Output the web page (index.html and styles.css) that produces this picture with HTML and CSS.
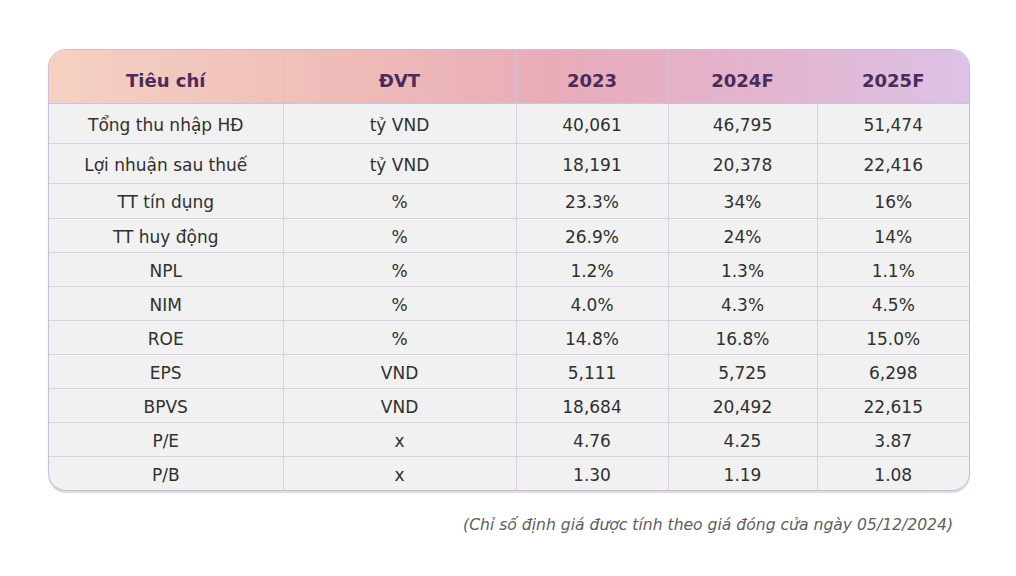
FILE: index.html
```html
<!DOCTYPE html>
<html lang="vi">
<head>
<meta charset="utf-8">
<title>Bảng chỉ số</title>
<link rel="stylesheet" href="styles.css">
</head>
<body>
<div class="page">
  <div class="card">
    <table class="data">
      <colgroup>
        <col class="c1"><col class="c2"><col class="c3"><col class="c4"><col class="c5">
      </colgroup>
      <thead>
        <tr><th>Tiêu chí</th><th>ĐVT</th><th>2023</th><th>2024F</th><th>2025F</th></tr>
      </thead>
      <tbody>
        <tr class="tall"><td>Tổng thu nhập HĐ</td><td>tỷ VND</td><td>40,061</td><td>46,795</td><td>51,474</td></tr>
        <tr class="tall"><td>Lợi nhuận sau thuế</td><td>tỷ VND</td><td>18,191</td><td>20,378</td><td>22,416</td></tr>
        <tr class="mid"><td>TT tín dụng</td><td>%</td><td>23.3%</td><td>34%</td><td>16%</td></tr>
        <tr><td>TT huy động</td><td>%</td><td>26.9%</td><td>24%</td><td>14%</td></tr>
        <tr><td>NPL</td><td>%</td><td>1.2%</td><td>1.3%</td><td>1.1%</td></tr>
        <tr><td>NIM</td><td>%</td><td>4.0%</td><td>4.3%</td><td>4.5%</td></tr>
        <tr><td>ROE</td><td>%</td><td>14.8%</td><td>16.8%</td><td>15.0%</td></tr>
        <tr><td>EPS</td><td>VND</td><td>5,111</td><td>5,725</td><td>6,298</td></tr>
        <tr><td>BPVS</td><td>VND</td><td>18,684</td><td>20,492</td><td>22,615</td></tr>
        <tr><td>P/E</td><td>x</td><td>4.76</td><td>4.25</td><td>3.87</td></tr>
        <tr class="last"><td>P/B</td><td>x</td><td>1.30</td><td>1.19</td><td>1.08</td></tr>
      </tbody>
    </table>
  </div>
  <p class="note">(Chỉ số định giá được tính theo giá đóng cửa ngày 05/12/2024)</p>
</div>
</body>
</html>
```

FILE: styles.css
```css
* { box-sizing: border-box; }
html, body { margin: 0; padding: 0; background: #ffffff; }
body { font-family: "DejaVu Sans", "Open Sans", sans-serif; color: #303030; }

.page { padding: 49px 0 0 48px; width: 1016px; height: 576px; }

.card {
  width: 922px;
  border: 1.5px solid #cbbcda;
  border-radius: 18px;
  overflow: hidden;
  background: #f1f1f1;
  box-shadow: 0 1.5px 1px rgba(120, 100, 140, 0.25);
}

.data {
  width: 100%;
  border-collapse: collapse;
  table-layout: fixed;
}
.c1 { width: 234px; }
.c2 { width: 233px; }
.c3 { width: 152px; }
.c4 { width: 149px; }
.c5 { width: auto; }

.data thead tr {
  background: linear-gradient(90deg, #f5d1c1 0%, #eebab8 35%, #e8acb9 55%, #e3b4cf 78%, #dcc2e6 100%);
}
.data th {
  height: 53px;
  padding: 9px 0 0 0;
  font-size: 18px;
  font-weight: 700;
  color: #4b2a5c;
  text-align: center;
  border-left: 1px solid #d8bfd8;
  border-bottom: 1.5px solid #cfc0dc;
}
.data th:first-child { border-left: none; }

.data td {
  height: 34px;
  padding: 4px 0 0 0;
  font-size: 17px;
  text-align: center;
  border-left: 1px solid #d9d0e4;
  border-bottom: 1px solid #d9d0e4;
  line-height: 1;
}
.data td:first-child { border-left: none; }
.data tr.tall td { height: 40px; }
.data tr.mid td { height: 35px; }
.data tr.last td { border-bottom: none; }

.note {
  margin: 25px 63px 0 0;
  text-align: right;
  font-size: 15.6px;
  font-style: italic;
  color: #5e5e5e;
}
```
